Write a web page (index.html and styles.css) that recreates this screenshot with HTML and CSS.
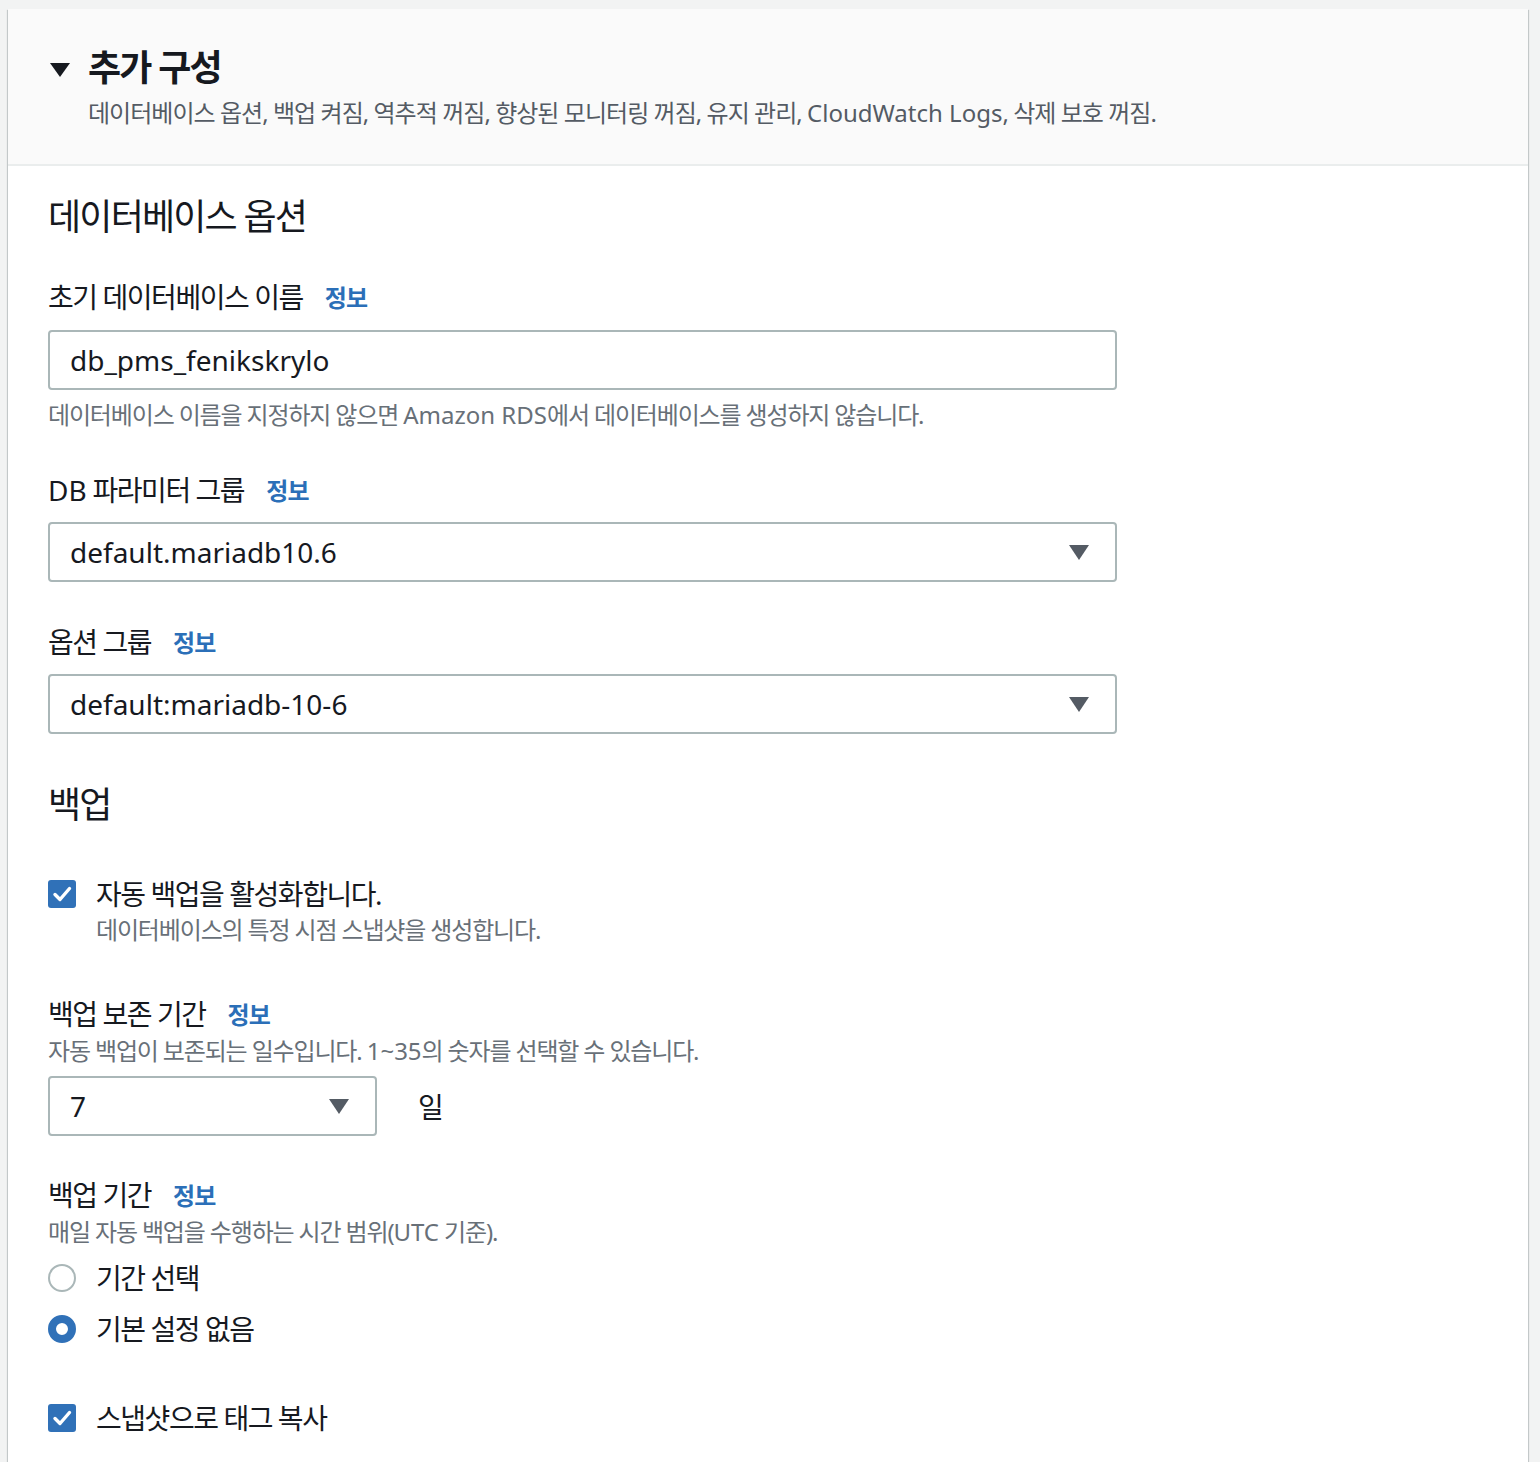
FILE: index.html
```html
<!DOCTYPE html>
<html lang="ko">
<head>
<meta charset="utf-8">
<link rel="stylesheet" href="styles.css">
</head>
<body>
<div class="card">
  <div class="card-header">
    <div class="title-row">
      <svg class="caret" width="20" height="14" viewBox="0 0 20 14"><polygon points="0,0 20,0 10,14" fill="#16191f"/></svg>
      <h2 class="title">추가 구성</h2>
    </div>
    <p class="subtitle">데이터베이스 옵션, 백업 켜짐, 역추적 꺼짐, 향상된 모니터링 꺼짐, 유지 관리, <span class="en">CloudWatch Logs</span>, 삭제 보호 꺼짐.</p>
  </div>
  <div class="card-body">
    <h3 class="section-title first">데이터베이스 옵션</h3>

    <div class="field f-dbname">
      <div class="label">초기 데이터베이스 이름<a class="info">정보</a></div>
      <div class="control input">db_pms_fenikskrylo</div>
      <div class="hint after">데이터베이스 이름을 지정하지 않으면 <span class="en">Amazon RDS</span>에서 데이터베이스를 생성하지 않습니다.</div>
    </div>

    <div class="field f-param">
      <div class="label"><span class="en">DB</span> 파라미터 그룹<a class="info">정보</a></div>
      <div class="control select">default.mariadb10.6<span class="arrow"></span></div>
    </div>

    <div class="field f-option">
      <div class="label">옵션 그룹<a class="info">정보</a></div>
      <div class="control select">default:mariadb-10-6<span class="arrow"></span></div>
    </div>

    <h3 class="section-title backup">백업</h3>

    <div class="check-row f-auto">
      <span class="checkbox"><svg width="28" height="28" viewBox="0 0 28 28"><rect width="28" height="28" rx="3" fill="#3071b8"/><path d="M7 14.5 L12 19.5 L21.5 8.5" fill="none" stroke="#fff" stroke-width="3.4" stroke-linecap="round" stroke-linejoin="round"/></svg></span>
      <div class="check-text">
        <div class="check-label">자동 백업을 활성화합니다.</div>
        <div class="hint">데이터베이스의 특정 시점 스냅샷을 생성합니다.</div>
      </div>
    </div>

    <div class="field f-retention">
      <div class="label">백업 보존 기간<a class="info">정보</a></div>
      <div class="hint desc">자동 백업이 보존되는 일수입니다. <span class="en">1~35</span>의 숫자를 선택할 수 있습니다.</div>
      <div class="inline-row">
        <div class="control select small">7<span class="arrow"></span></div>
        <span class="unit">일</span>
      </div>
    </div>

    <div class="field f-window">
      <div class="label">백업 기간<a class="info">정보</a></div>
      <div class="hint desc">매일 자동 백업을 수행하는 시간 범위(<span class="en">UTC</span> 기준).</div>
      <div class="radio-row r1"><span class="radio"></span><span class="radio-label">기간 선택</span></div>
      <div class="radio-row r2"><span class="radio checked"></span><span class="radio-label">기본 설정 없음</span></div>
    </div>

    <div class="check-row f-tags">
      <span class="checkbox"><svg width="28" height="28" viewBox="0 0 28 28"><rect width="28" height="28" rx="3" fill="#3071b8"/><path d="M7 14.5 L12 19.5 L21.5 8.5" fill="none" stroke="#fff" stroke-width="3.4" stroke-linecap="round" stroke-linejoin="round"/></svg></span>
      <div class="check-text">
        <div class="check-label">스냅샷으로 태그 복사</div>
      </div>
    </div>
  </div>
</div>
</body>
</html>
```

FILE: styles.css
```css
html, body {
  margin: 0;
  padding: 0;
}
body {
  background: #f2f3f3;
  font-family: "Noto Sans", "Noto Sans CJK KR", sans-serif;
  color: #16191f;
  padding: 9px 12px 0 8px;
}
.en {
  letter-spacing: 0;
}
.card {
  background: #fff;
  box-shadow: 0 1px 1px 0 rgba(0, 28, 36, 0.3), 1px 1px 1px 0 rgba(0, 28, 36, 0.15), -1px 1px 1px 0 rgba(0, 28, 36, 0.15);
  min-height: 1460px;
}
.card-header {
  background: #fafafa;
  border-bottom: 2px solid #eaeded;
  padding: 37px 40px 35px 42px;
}
.title-row {
  display: flex;
  align-items: center;
  gap: 18px;
  height: 44px;
}
.caret {
  display: block;
  margin-top: 3px;
}
.title {
  margin: 0;
  font-size: 36px;
  line-height: 44px;
  font-weight: 700;
  letter-spacing: -1.8px;
}
.subtitle {
  margin: 7px 0 0 38px;
  font-size: 24px;
  line-height: 32px;
  color: #545b64;
  letter-spacing: -0.96px;
}
.card-body {
  padding: 29px 40px 0 40px;
}
.section-title {
  margin: 0;
  font-size: 36px;
  line-height: 44px;
  font-weight: 400;
  letter-spacing: -1.8px;
}
.section-title.backup {
  margin-top: 49px;
}
.label {
  display: flex;
  align-items: center;
  height: 40px;
  font-size: 28px;
  line-height: 40px;
  white-space: pre;
  letter-spacing: -1.45px;
}
.info {
  font-size: 24px;
  line-height: 40px;
  font-weight: 700;
  color: #2b6fb8;
  margin-left: 22px;
  padding-top: 2px;
  letter-spacing: -0.8px;
}
.hint {
  font-size: 24px;
  line-height: 32px;
  color: #687078;
  letter-spacing: -1.15px;
}
.hint.after {
  margin-top: 9px;
}
.hint.desc {
  margin-top: 1px;
}
.field {
  margin-top: 39px;
}
.f-dbname {
  margin-top: 38px;
}
.f-option {
  margin-top: 40px;
}
.control {
  box-sizing: border-box;
  width: 1069px;
  height: 60px;
  border: 2px solid #aab7b8;
  border-radius: 4px;
  padding: 0 20px;
  font-size: 28px;
  line-height: 56px;
  margin-top: 13px;
  position: relative;
  letter-spacing: 0;
}
.select {
  margin-top: 12px;
}
.arrow {
  position: absolute;
  right: 26px;
  top: 21px;
  width: 0;
  height: 0;
  border-left: 10px solid transparent;
  border-right: 10px solid transparent;
  border-top: 15px solid #545b64;
}
.inline-row {
  display: flex;
  align-items: center;
  margin-top: 9px;
}
.control.small {
  width: 329px;
  margin-top: 0;
}
.unit {
  font-size: 28px;
  margin-left: 41px;
}
.check-row {
  display: flex;
  align-items: flex-start;
  gap: 20px;
}
.checkbox {
  display: block;
  width: 28px;
  height: 28px;
  margin-top: 6px;
}
.checkbox svg {
  display: block;
}
.check-label {
  font-size: 28px;
  line-height: 40px;
  letter-spacing: -1.45px;
}
.f-auto {
  margin-top: 47px;
}
.f-retention {
  margin-top: 48px;
}
.f-tags {
  margin-top: 49px;
}
.radio-row {
  display: flex;
  align-items: center;
  gap: 20px;
  height: 40px;
}
.radio-row.r1 {
  margin-top: 10px;
}
.radio-row.r2 {
  margin-top: 11px;
}
.radio {
  box-sizing: border-box;
  width: 28px;
  height: 28px;
  border-radius: 50%;
  border: 2px solid #aab7b8;
  background: #fff;
}
.radio.checked {
  border: 8px solid #3071b8;
}
.radio-label {
  font-size: 28px;
  line-height: 40px;
  letter-spacing: -1.45px;
}
```
